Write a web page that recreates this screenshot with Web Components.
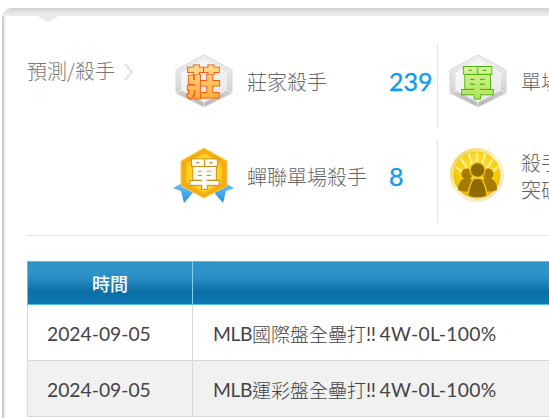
<!DOCTYPE html>
<html lang="zh-Hant"><head><meta charset="utf-8">
<style>
html,body{margin:0;padding:0;background:#fff;overflow:hidden;width:549px;height:418px}
body{font-family:Lato,"Noto Sans CJK TC",sans-serif;color:#444}
</style></head><body>
<kill-card>
  <kill-summary>
    <kill-stat kind="silver-zhuang" label="莊家殺手" value="239"></kill-stat>
    <kill-stat kind="silver-dan" label="單場殺手" value="" divider="no"></kill-stat>
    <kill-stat kind="gold-dan" label="蟬聯單場殺手" value="8"></kill-stat>
    <kill-stat kind="coin" label="殺手<br>突破" value="" divider="no"></kill-stat>
  </kill-summary>
  <kill-table>
    <kill-row date="2024-09-05" cjk="國際盤全壘打"></kill-row>
    <kill-row date="2024-09-05" cjk="運彩盤全壘打" alt></kill-row>
  </kill-table>
</kill-card>
<script>
class KillCard extends HTMLElement{constructor(){super();this.attachShadow({mode:'open'}).innerHTML=`<style>
:host{display:block;margin:8px 0 0 2px;width:760px;height:500px;position:relative;border-radius:10px 0 0 0;overflow:hidden;
 background:linear-gradient(90deg,#c6c6c6 0,#cfcfcf 1.5px,#ececec 2px,#fff 5px)}
.top{height:8px;background:linear-gradient(#d0d0d0 0,#dcdcdc 30%,#eeeeee 100%)}
.notch{position:absolute;left:35px;top:8px;width:0;height:0;border-left:11px solid transparent;border-right:11px solid transparent;border-top:6px solid #ebebeb}
.body{padding:0 0 0 25px}
</style><div class="top"></div><div class="notch"></div><div class="body"><slot></slot></div>`}}
customElements.define('kill-card',KillCard);

class KillSummary extends HTMLElement{constructor(){super();this.attachShadow({mode:'open'}).innerHTML=`<style>
:host{display:block;width:720px;height:220px;box-sizing:border-box;padding-top:29px;border-bottom:1px solid #e3e3e3}
.wrap{display:flex}
.lead{width:146px;flex:none;display:flex;align-items:flex-start;gap:8px;padding-top:12px;font:300 20px/28px "Noto Sans CJK TC",sans-serif;color:#777}
.grid{display:grid;grid-template-columns:265px 263px;grid-auto-rows:83px;row-gap:12px;column-gap:9px}
svg{margin-top:6px;flex:none}
</style><div class="wrap"><div class="lead"><span>預測/殺手</span><svg width="11" height="18" viewBox="0 0 11 18"><path d="M2 1 9 9 2 17" fill="none" stroke="#e0e0e0" stroke-width="2"/></svg></div><div class="grid"><slot></slot></div></div>`}}
customElements.define('kill-summary',KillSummary);

const hexOuter="M31 4 59 19V42L31 56 3 42V19z", hexInner="M31 9 53 22V39L31 51 9 39V22z";
const glyphDefs=(top,bot,edge)=>`<defs>
<linearGradient id="s" x1="0" y1="0" x2="0" y2="1"><stop offset="0" stop-color="#f2f2f2"/><stop offset=".55" stop-color="#dcdcdc"/><stop offset="1" stop-color="#b4b4b4"/></linearGradient>
<linearGradient id="i" x1="0" y1="0" x2="1" y2="1"><stop offset="0" stop-color="#fbfbfb"/><stop offset="1" stop-color="#e6e6e6"/></linearGradient>
<linearGradient id="t" x1="0" y1="0" x2="0" y2="1"><stop offset="0" stop-color="${top}"/><stop offset="1" stop-color="${bot}"/></linearGradient>
<filter id="o" x="-20%" y="-20%" width="140%" height="140%"><feMorphology in="SourceAlpha" operator="dilate" radius="0.7" result="x"/><feFlood flood-color="${edge}"/><feComposite in2="x" operator="in" result="e"/><feMerge><feMergeNode in="e"/><feMergeNode in="SourceGraphic"/></feMerge></filter>
</defs>`;
const gtext=(c,x,y,size)=>`<text x="${x}" y="${y}" text-anchor="middle" font-family="'Noto Sans CJK TC',sans-serif" font-weight="900" font-size="${size}" fill="url(#t)" filter="url(#o)">${c}</text>`;
const hex=(c,top,bot,edge)=>`<svg width="62" height="60" viewBox="0 0 62 60">${glyphDefs(top,bot,edge)}
<path d="${hexOuter}" fill="url(#s)" stroke="#d6d6d6"/>
<path d="${hexInner}" fill="url(#i)" stroke="#f8f8f8"/>
<path d="M3 19 9 22M59 19 53 22M3 42 9 39M59 42 53 39M31 56V51" stroke="#ececec"/>
${gtext(c,30.5,43.5,34)}</svg>`;
const ICONS={
'silver-zhuang':hex('莊','#ffe9b0','#ffa52a','#f25a0a'),
'silver-dan':hex('單','#e8fbb0','#a6e24a','#4fb40c'),
'gold-dan':`<svg width="62" height="60" viewBox="0 0 62 60">${glyphDefs('#ffffff','#fffaf0','#c98e20')}
<defs><radialGradient id="g" cx=".5" cy=".5" r=".6"><stop offset="0" stop-color="#ffe95c"/><stop offset=".7" stop-color="#ffd21e"/><stop offset="1" stop-color="#f9b712"/></radialGradient>
<linearGradient id="b" x1="0" y1="0" x2="0" y2="1"><stop offset="0" stop-color="#6fc4f5"/><stop offset="1" stop-color="#1f8fe6"/></linearGradient></defs>
<path d="M9 37 0 42l8 3 3 12 12-14zM52 37l9 5-8 3-3 12-12-14z" fill="url(#b)"/>
<path d="M31 2 54 15V40L31 52 8 40V15z" fill="#f5ad16" stroke="#fbcf4a"/>
<path d="M31 7 49 18V37L31 47 13 37V18z" fill="url(#g)"/>
${gtext('單',31.5,38.5,31)}</svg>`,
'coin':`<svg width="62" height="60" viewBox="0 0 62 60">
<defs><radialGradient id="c" cx=".5" cy=".35" r=".7"><stop offset="0" stop-color="#ffe542"/><stop offset=".65" stop-color="#f8cb08"/><stop offset="1" stop-color="#e8ab00"/></radialGradient>
<linearGradient id="r" x1="0" y1="0" x2="1" y2="1"><stop offset="0" stop-color="#edc92e"/><stop offset=".5" stop-color="#fdf6cc"/><stop offset="1" stop-color="#e4e0cc"/></linearGradient></defs>
<circle cx="30" cy="29" r="27" fill="url(#r)"/><circle cx="30" cy="29" r="23.5" fill="url(#c)"/>
<g stroke="#fff2a0" stroke-width="2.4" opacity=".9"><path d="M30 7V18M22 8l3 11M38 8l-3 11M14 13l6 9M46 13l-6 9M9 21l8 6M51 21l-8 6"/></g>
<g fill="#a67c06"><circle cx="20" cy="28" r="5.5"/><path d="M11 44c0-8 4-12 9-12s9 4 9 12c-4 2-14 2-18 0z"/><circle cx="41" cy="28" r="5.5"/><path d="M32 44c0-8 4-12 9-12s9 4 9 12c-4 2-14 2-18 0z"/></g>
<g fill="#8f6a00" stroke="#f4cb22" stroke-width="1.3"><circle cx="30.5" cy="24" r="7.5"/><path d="M21 50c0-8 3-12 5-17 3-1 6-1 9 0 2 5 5 9 5 17-5 2.5-14 2.5-19 0z"/></g></svg>`};

class KillStat extends HTMLElement{connectedCallback(){if(this.shadowRoot)return;
const hasDiv=this.getAttribute('divider')!=='no';
this.attachShadow({mode:'open'}).innerHTML=`<style>
:host{display:flex;align-items:center;box-sizing:border-box;height:83px;${hasDiv?'border-right:1px solid #e3e3e3;':''}}
.icon{width:62px;height:60px;flex:none;margin-right:12px;margin-top:-11px}
.label{flex:none;width:142px;font:300 20px/27px "Noto Sans CJK TC",sans-serif;color:#666;margin-top:-11px;white-space:nowrap}
.num{font:400 25px/30px Lato,sans-serif;-webkit-text-stroke:.35px #129ce8;color:#129ce8;margin-top:-11px}
svg{display:block}
</style><div class="icon">${ICONS[this.getAttribute('kind')]}</div><div class="label">${this.getAttribute('label')}</div><div class="num">${this.getAttribute('value')}</div>`}}
customElements.define('kill-stat',KillStat);

class KillTable extends HTMLElement{constructor(){super();this.attachShadow({mode:'open'}).innerHTML=`<style>
:host{display:block;width:720px;margin-top:25px}
.head{display:grid;grid-template-columns:165px 1fr;height:44px;box-sizing:border-box;border:1px solid #5cc0e4;border-right:0;
 background:linear-gradient(#2f95c9 0,#2b90c6 35%,#0a6ea6 72%,#0f79b3 100%)}
.head div{display:flex;align-items:center;justify-content:center;color:#fff;font:500 18px "Noto Sans CJK TC",sans-serif}
.head div:first-child{border-right:1px solid #7fd0ea}
</style><div class="head"><div>時間</div><div></div></div><slot></slot>`}}
customElements.define('kill-table',KillTable);

class KillRow extends HTMLElement{connectedCallback(){if(this.shadowRoot)return;
this.attachShadow({mode:'open'}).innerHTML=`<style>
:host{display:grid;grid-template-columns:165px 1fr;height:56px;box-sizing:border-box;border-left:1px solid #d8d8d8;border-bottom:1px solid #d8d8d8;
 background:${this.hasAttribute('alt')?'#f1f1f1':'#fff'};font:400 19.3px Lato,"Noto Sans CJK TC",sans-serif;color:#444}
div{display:flex;align-items:center;white-space:nowrap;padding-top:1px}
.d{padding-left:19px;border-right:1px solid #d8d8d8}
.t{padding-left:20px}
.t span{white-space:pre}
.m{letter-spacing:-.4px}
.c{font-size:19px;font-weight:300}
.b{letter-spacing:-.6px}
.r{letter-spacing:.3px}
</style><div class="d">${this.getAttribute('date')}</div><div class="t"><span class="m">MLB</span><span class="c">${this.getAttribute('cjk')}</span><span class="b">!! </span><span class="r">4W-0L-100%</span></div>`}}
customElements.define('kill-row',KillRow);
</script>
</body></html>
